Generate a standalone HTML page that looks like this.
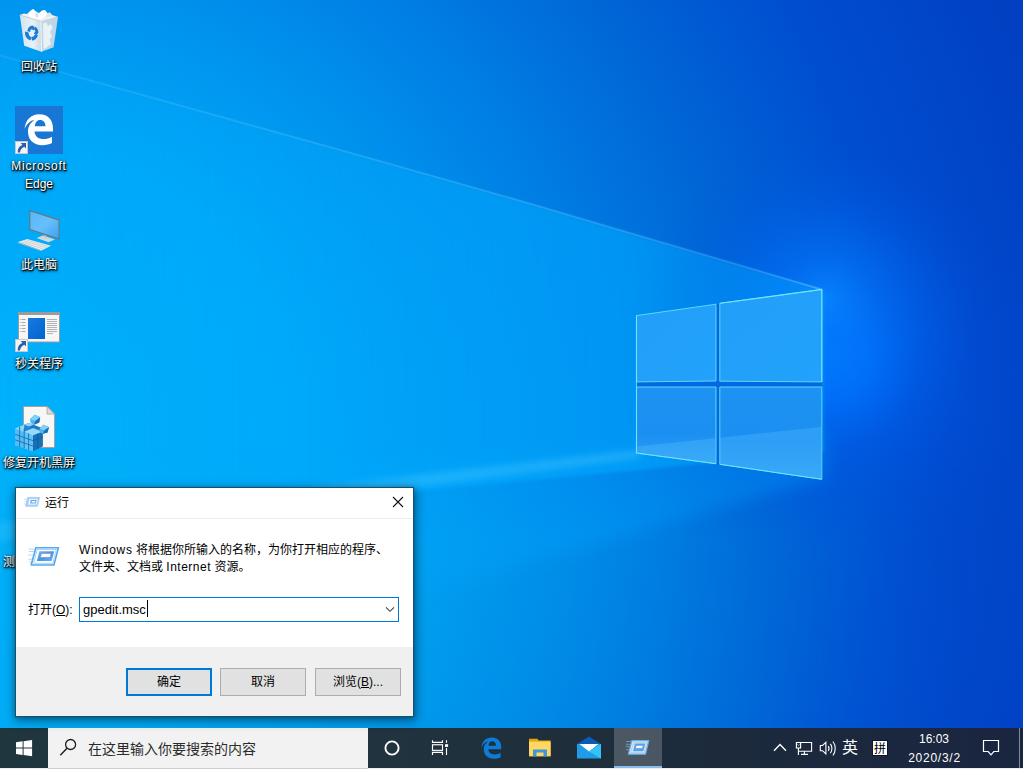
<!DOCTYPE html>
<html lang="zh-CN">
<head>
<meta charset="utf-8">
<title>运行</title>
<style>
html,body{margin:0;padding:0;}
body{width:1023px;height:769px;overflow:hidden;position:relative;background:#0a7fe0;font-family:"Liberation Sans","Noto Sans CJK SC",sans-serif;font-size:12px;color:#000;}
#wall{position:absolute;left:0;top:0;width:1023px;height:769px;display:block;}
.abs{position:absolute;}
/* desktop icons */
.dlabel{position:absolute;width:90px;text-align:center;color:#fff;font-size:12px;line-height:17px;text-shadow:1px 1px 1px rgba(0,0,0,.95),0 1px 2px rgba(0,0,0,.9),0 0 3px rgba(0,0,0,.6),1px 2px 3px rgba(0,0,0,.5);white-space:nowrap;}
/* dialog */
#dlg{position:absolute;left:15px;top:487px;width:399px;height:230px;box-sizing:border-box;border:1px solid #174f6c;background:#fff;box-shadow:1px 3px 10px 1px rgba(0,0,0,.4),0 1px 4px rgba(0,0,0,.22);}
#dlg .title{position:absolute;left:0;top:0;width:397px;height:30px;background:#fff;border-bottom:1px solid #ececec;}
#dlg .foot{position:absolute;left:0;top:159px;width:397px;height:69px;background:#f0f0f0;}
.btn{position:absolute;box-sizing:border-box;width:86px;height:28px;border:1px solid #adadad;background:#e1e1e1;text-align:center;line-height:27px;font-size:12px;}
/* taskbar */
#tb{position:absolute;left:0;top:728px;width:1023px;height:41px;background:linear-gradient(90deg,#20363f 0%,#20333e 38%,#1e2e3b 58%,#1b283d 80%,#1a2640 100%);}
#search{position:absolute;left:48px;top:0;width:320px;height:40px;background:#f2f2f2;border-bottom:1px solid #cdcdcd;}
#search span{position:absolute;left:40px;top:1px;line-height:40px;font-size:14px;color:#2b2b2b;}
.tray{position:absolute;color:#fff;}
</style>
</head>
<body>
<svg id="wall" viewBox="0 0 1023 769" width="1023" height="769">
<defs>
<radialGradient id="g0" cx="0" cy="440" r="1150" gradientUnits="userSpaceOnUse">
<stop offset="0" stop-color="#00b2fa"/>
<stop offset=".26" stop-color="#00a8f8"/>
<stop offset=".39" stop-color="#0094ee"/>
<stop offset=".52" stop-color="#007de3"/>
<stop offset=".65" stop-color="#0065d6"/>
<stop offset=".78" stop-color="#004ed0"/>
<stop offset=".91" stop-color="#0143c6"/>
<stop offset="1" stop-color="#033cbc"/>
</radialGradient>
<linearGradient id="gbeam" x1="0" y1="0" x2="822" y2="0" gradientUnits="userSpaceOnUse">
<stop offset="0" stop-color="#00acff" stop-opacity=".1"/>
<stop offset=".36" stop-color="#00acff" stop-opacity=".3"/>
<stop offset=".6" stop-color="#00aaff" stop-opacity=".55"/>
<stop offset=".76" stop-color="#00a8ff" stop-opacity=".62"/>
<stop offset=".86" stop-color="#00a6ff" stop-opacity=".48"/>
<stop offset="1" stop-color="#00a4ff" stop-opacity=".42"/>
</linearGradient>
<linearGradient id="gfloor" x1="0" y1="0" x2="822" y2="0" gradientUnits="userSpaceOnUse">
<stop offset="0" stop-color="#00a4ff" stop-opacity=".08"/>
<stop offset=".4" stop-color="#00a4ff" stop-opacity=".24"/>
<stop offset=".7" stop-color="#00a2ff" stop-opacity=".34"/>
<stop offset="1" stop-color="#0a9cff" stop-opacity=".36"/>
</linearGradient>
<radialGradient id="glow" cx="832" cy="360" r="215" gradientUnits="userSpaceOnUse">
<stop offset="0" stop-color="#007aff" stop-opacity="1"/>
<stop offset=".18" stop-color="#0070fc" stop-opacity=".92"/>
<stop offset=".4" stop-color="#0060ee" stop-opacity=".55"/>
<stop offset=".7" stop-color="#0054e0" stop-opacity=".2"/>
<stop offset="1" stop-color="#004cd8" stop-opacity="0"/>
</radialGradient>
<radialGradient id="glow2" cx="826" cy="300" r="150" gradientUnits="userSpaceOnUse">
<stop offset="0" stop-color="#0884ff" stop-opacity=".9"/>
<stop offset=".3" stop-color="#0478fa" stop-opacity=".5"/>
<stop offset=".7" stop-color="#006cf0" stop-opacity=".15"/>
<stop offset="1" stop-color="#0064e8" stop-opacity="0"/>
</radialGradient>
<linearGradient id="gfl2" x1="0" y1="0" x2="1023" y2="0" gradientUnits="userSpaceOnUse">
<stop offset="0" stop-color="#00b4f0" stop-opacity=".3"/>
<stop offset=".4" stop-color="#00b4f0" stop-opacity=".34"/>
<stop offset=".6" stop-color="#00b0f0" stop-opacity=".24"/>
<stop offset=".8" stop-color="#00a8f0" stop-opacity=".08"/>
<stop offset=".95" stop-color="#00a0f0" stop-opacity="0"/>
</linearGradient>
<linearGradient id="gfl2m" x1="0" y1="0" x2="0" y2="769" gradientUnits="userSpaceOnUse">
<stop offset=".58" stop-color="#000"/>
<stop offset=".7" stop-color="#fff"/>
<stop offset="1" stop-color="#fff"/>
</linearGradient>
<mask id="mfl2" maskUnits="userSpaceOnUse" x="0" y="0" width="1023" height="769"><rect width="1023" height="769" fill="url(#gfl2m)"/></mask>
<linearGradient id="gline" x1="0" y1="0" x2="822" y2="0" gradientUnits="userSpaceOnUse">
<stop offset="0" stop-color="#9fe0ff" stop-opacity=".12"/>
<stop offset=".6" stop-color="#9fe0ff" stop-opacity=".22"/>
<stop offset=".9" stop-color="#a8e6ff" stop-opacity=".2"/>
<stop offset="1" stop-color="#c8f4ff" stop-opacity=".3"/>
</linearGradient>
<linearGradient id="gstreak" x1="0" y1="0" x2="640" y2="0" gradientUnits="userSpaceOnUse">
<stop offset="0" stop-color="#40c4ff" stop-opacity=".3"/>
<stop offset=".65" stop-color="#40c4ff" stop-opacity=".42"/>
<stop offset="1" stop-color="#50c8ff" stop-opacity=".35"/>
</linearGradient>
<linearGradient id="gpt" x1="0" y1="0" x2="1" y2="1">
<stop offset="0" stop-color="#229ef8"/><stop offset="1" stop-color="#22a2fc"/>
</linearGradient>
<linearGradient id="gpb" x1="0" y1="0" x2="0" y2="1">
<stop offset="0" stop-color="#1c92f2"/><stop offset=".6" stop-color="#1c90f2"/><stop offset="1" stop-color="#28a0f6"/>
</linearGradient>
<filter id="b07" x="-5%" y="-5%" width="110%" height="110%"><feGaussianBlur stdDeviation=".7"/></filter>
<filter id="b2" x="-10%" y="-10%" width="120%" height="120%"><feGaussianBlur stdDeviation="1.5"/></filter>
<filter id="b3" x="-10%" y="-10%" width="120%" height="120%"><feGaussianBlur stdDeviation="3"/></filter>
<filter id="b8" x="-20%" y="-20%" width="140%" height="140%"><feGaussianBlur stdDeviation="8"/></filter>
</defs>
<rect width="1023" height="769" fill="url(#g0)"/>
<rect width="1023" height="769" fill="url(#glow)"/>
<rect width="1023" height="769" fill="url(#glow2)"/>
<rect width="1023" height="769" fill="url(#gfl2)" mask="url(#mfl2)"/>
<!-- lower beam (floor) soft -->
<polygon points="826,430 -40,500 -40,724 826,478" fill="url(#gfloor)" filter="url(#b8)"/>
<!-- upper beam -->
<polygon points="824,290 520,200.800 370,158.400 0,55.300 -20,49.700 -20,534 824,452" fill="url(#gbeam)" filter="url(#b2)"/>
<!-- floor streak -->
<polygon points="640,450 -20,524 -20,544 640,458" fill="url(#gstreak)" filter="url(#b3)"/>
<!-- beam edge line -->
<polyline points="-10,52.500 0,55.300 370,158.400 520,200.800 822,289.600" fill="none" stroke="url(#gline)" stroke-width="1.800" filter="url(#b07)"/>
<!-- logo -->
<polygon points="636.500,315.600 821.800,289.500 821.800,479.300 636.500,453" fill="#0468e2"/>
<g stroke="#5cd8f4" stroke-width="1" stroke-linejoin="miter">
<polygon points="636.500,315.600 716,304.200 716,381 636.500,381.900" fill="url(#gpt)"/>
<polygon points="719.800,303.300 821.800,289.500 821.800,381.900 719.800,381.200" fill="url(#gpt)"/>
<polygon points="636.500,387 716,387 716,463.700 636.500,453" fill="url(#gpb)"/>
<polygon points="719.800,387 821.800,387 821.800,479.300 719.800,464.300" fill="url(#gpb)"/>
</g>
<path d="M636.500 315.600 L636.500 453 L716 463.700 M719.800 464.300 L821.800 479.300 M719.800 303.300 L821.800 289.500 L821.800 381.900" stroke="#7ae8f8" stroke-width="1.100" fill="none" opacity=".8"/>
<!-- reflection in lower panes -->
<polygon points="637.200,446.400 715.700,438.200 715.700,463 637.200,452.400" fill="#5cc0ff" opacity=".32"/>
<polygon points="720.100,437.700 821.200,427 821.200,478.500 720.100,463.700" fill="#5cc0ff" opacity=".3"/>
</svg>


<!-- desktop icons -->
<svg class="abs" style="left:0;top:0" width="90" height="480" viewBox="0 0 90 480">
<defs>
<linearGradient id="binf" x1="0" y1="0" x2="1" y2="0"><stop offset="0" stop-color="#dfe7ee"/><stop offset=".6" stop-color="#f4f6f8"/><stop offset="1" stop-color="#d5dde5"/></linearGradient>
<linearGradient id="scr" x1="0" y1="0" x2="1" y2="1"><stop offset="0" stop-color="#5ab6f8"/><stop offset=".5" stop-color="#66c0fb"/><stop offset="1" stop-color="#3fa2f0"/></linearGradient>
<linearGradient id="blu" x1="0" y1="0" x2="1" y2="1"><stop offset="0" stop-color="#1a7ae0"/><stop offset="1" stop-color="#0063d0"/></linearGradient>
</defs>
<!-- recycle bin -->
<g>
<polygon points="19.800,15 41,21.500 41.500,51.800 24.200,45.800" fill="url(#binf)" opacity=".95"/>
<polygon points="41,21.500 58,17 53.600,47.300 41.500,51.800" fill="#d3dde7" opacity=".9"/>
<polygon points="43,24 46,22 48,26 51,24 52.500,28 50,32 52,36 49.500,40 51,44 46,48 43.500,49" fill="#f1f4f7" opacity=".9"/>
<polygon points="19.800,15 24,13.500 27,14 30,11 33,9 36,11.500 39,13 42,10.500 45,10 47.500,13 50,12.500 52,15 58,17 41,22" fill="#eef1f4"/>
<polygon points="28,15 31,11 33.500,9.200 36,12 38.500,14.500 42,11 45,10.300 46.500,13.500 45,17 41,19.500 36,18.500 32,18" fill="#ffffff"/>
<polygon points="36,12 38.500,14.500 37.500,18 35,16" fill="#d9dee4"/>
<polygon points="46.500,13.500 50,12.800 51,15.500 47,17.500" fill="#dfe4ea"/>
<path d="M19.800 15 L41 21.500 L58 17" stroke="#c2ccd6" stroke-width=".8" fill="none"/>
<path d="M41 21.500 L41.500 51.800" stroke="#f8fafc" stroke-width=".9" fill="none"/>
<g fill="#1c7ad9">
<path d="M27.300 31.300 C27.600 28 29.500 25.800 32.500 25.600 L34.800 27.200 L33.800 30.200 L31.500 29.200 C30.600 29.600 30.200 30.600 30.200 32 Z"/>
<path d="M35.200 26.800 C37.500 28 38.600 30.300 38.300 33 L36.500 35 L33.800 33.400 L35.300 31.600 C35.200 30.600 34.700 29.800 33.900 29.300 Z"/>
<path d="M38 35.300 C37 38.300 35 40.300 32.300 40.700 L31 37.200 L32.600 36.800 C33.800 36.300 34.600 35.400 35 34.200 Z"/>
<path d="M30.800 40.300 C28 39.800 26 37.800 25.200 35 C24.900 33.800 24.900 32.600 25.100 31.600 L28.600 32.600 C28.500 34.800 29.300 36.200 30.900 36.900 Z"/>
</g>
</g>
<!-- edge tile -->
<rect x="15" y="106" width="48" height="48" fill="#1877d4"/>
<path d="M24.500 129 C25.500 120 31 114.300 39.500 114.300 C48 114.300 53 120 53 128.500 L53 131.500 L34.500 131.500 C35 136.500 38.500 139 43.500 139 C46.500 139 49.500 138.200 52 136.700 L52 143 C49.500 144.400 46 145.200 42.500 145.200 C33.500 145.200 28 139.800 28 131.500 C28 126.500 30.500 122.200 35 119.800 C30 120.600 26.500 124.300 24.500 129 Z M34.800 126.300 L45.500 126.300 C45.500 122.500 43.500 120 40 120 C37 120 35.200 122.500 34.800 126.300 Z" fill="#fff"/>
<rect x="15.500" y="141.500" width="12" height="12" fill="#f4f4f4" stroke="#c8c8c8" stroke-width="1"/>
<path d="M26 143 L26 148.400 L24.300 146.700 C21.800 147.800 20.300 149.800 19.900 152.600 L17.800 152.600 C17.500 148.800 19.400 145.900 22.500 144.900 L20.700 143 Z" fill="#2b5eab"/>
<!-- this pc -->
<polygon points="29.300,209.900 59.500,219.600 59.500,239.800 29.300,229.700" fill="#6f7378"/>
<polygon points="30.400,211.400 58.500,220.400 58.500,238.300 30.400,228.900" fill="url(#scr)"/>
<polygon points="36.500,238 43,235.500 55,239.500 48.500,242.300" fill="#d4d8dc"/>
<polygon points="44,235 47,236 47,238 44,237.300" fill="#b9bec4"/>
<polygon points="17.900,242.100 27.300,239 51,245.800 41.600,250.500" fill="#e9ecef"/>
<polygon points="17.900,242.100 41.600,250.500 41.600,251.300 17.900,242.900" fill="#b4bac0"/>
<path d="M21 242 L43 248.800 M24 241 L46 247.600 M27 240 L48.500 246.600" stroke="#c3c9cf" stroke-width=".7" fill="none"/>
<!-- window shortcut -->
<rect x="18.500" y="312.500" width="41" height="29.500" fill="#f6f6f6" stroke="#9a9a9a" stroke-width="1"/>
<rect x="18" y="312" width="42" height="3" fill="#9b9b9b"/>
<rect x="28" y="318" width="17" height="21" fill="url(#blu)"/>
<path d="M21.500 319.500h4M21.500 322.500h4M21.500 325.500h4M21.500 328.500h4M21.500 331.500h4" stroke="#a9a9a9" stroke-width="1"/>
<path d="M19.700 319.500h.9M19.700 322.500h.9M19.700 325.500h.9M19.700 328.500h.9M19.700 331.500h.9" stroke="#a9a9a9" stroke-width="1"/>
<path d="M47 319.500h10M47 321.500h10M47 323.500h10M47 325.500h10M47 327.500h10M47 329.500h10M47 331.500h10M47 333.500h6" stroke="#b3b3b3" stroke-width="1"/>
<rect x="15.500" y="339.500" width="12" height="12" fill="#f4f4f4" stroke="#c8c8c8" stroke-width="1"/>
<path d="M26 341 L26 346.400 L24.300 344.700 C21.800 345.800 20.300 347.800 19.900 350.600 L17.800 350.600 C17.500 346.800 19.400 343.900 22.500 342.900 L20.700 341 Z" fill="#2b5eab"/>
<!-- reg file -->
<path d="M23.500 406.500 L47 406.500 L54.500 414 L54.500 447.500 L23.500 447.500 Z" fill="#f7f7f7" stroke="#a9a09a" stroke-width="1"/>
<path d="M47 406.500 L47 414 L54.500 414 Z" fill="#dcdcdc" stroke="#a9a09a" stroke-width=".8"/>
<g>
<!-- big block -->
<polygon points="15,428.500 24.200,424.700 33,428.300 33,451.200 15,445.500" fill="#55bdf3"/>
<polygon points="24.200,424.700 28.800,423 42.700,428.300 42.700,446.300 33,451.200 33,434.500 24.200,431" fill="#1d78bf"/>
<polygon points="15,428.500 24.200,424.700 28.800,423 33.500,424.800 24.200,428.800 24.200,432" fill="#8bd6fb"/>
<polygon points="24.200,431.500 33,435 33,451.200 24.200,448.200" fill="#62c4f6"/>
<polygon points="24.200,431.500 33,428 42.700,431.800 33,435.500" fill="#93dafc"/>
<polygon points="33,435.500 42.700,431.800 42.700,446.300 33,451.200" fill="#1a70b5"/>
<polygon points="24.200,424.700 33,428 24.200,431.500" fill="#2585cc"/>
<path d="M15 434.200 L24.200 437.600 L33 440.600 M15 439.800 L24.200 443 L33 446 M19.600 426.800 L19.600 447 M24.200 428.800 L24.200 448.300 M28.600 433.300 L28.600 449.800" stroke="#1670b4" stroke-width=".9" fill="none"/>
<path d="M33 440.600 L42.700 436.800 M37.800 433.600 L37.800 448.700" stroke="#0f5d9c" stroke-width=".8" fill="none"/>
<!-- floating cubes -->
<polygon points="30,419.300 34.800,414.800 40.200,417.300 39.200,422.600 34,424.800" fill="#2a8bd2"/>
<polygon points="30,419.300 34.800,414.800 40.200,417.300 35.200,421.300" fill="#7fd0fa"/>
<polygon points="35.200,421.300 40.200,417.300 39.200,422.600 34,424.800" fill="#176fb8"/>
<polygon points="30,419.300 35.200,421.300 34,424.800 30.800,423" fill="#4db4ee"/>
<polygon points="39.300,429.300 43.300,424.800 49,427.300 47.500,432.600 42.800,433.800" fill="#2a8bd2"/>
<polygon points="39.300,429.300 43.300,424.800 49,427.300 44.300,430.600" fill="#7fd0fa"/>
<polygon points="44.300,430.600 49,427.300 47.500,432.600 42.800,433.800" fill="#176fb8"/>
<polygon points="39.300,429.300 44.300,430.600 42.800,433.800 40,432.600" fill="#4db4ee"/>
</g>
</svg>
<div class="dlabel" style="left:-6px;top:59px;">回收站</div>
<div class="dlabel" style="left:-6px;top:158px;letter-spacing:.75px;">Microsoft</div>
<div class="dlabel" style="left:-6px;top:176px;">Edge</div>
<div class="dlabel" style="left:-6px;top:257px;">此电脑</div>
<div class="dlabel" style="left:-6px;top:356px;">秒关程序</div>
<div class="dlabel" style="left:-6px;top:455px;">修复开机黑屏</div>
<div class="dlabel" style="left:-6px;top:554px;">测试电脑速度</div>

<!-- taskbar -->
<div id="tb">
<svg class="abs" style="left:0;top:0" width="1023" height="41" viewBox="0 0 1023 41">
<!-- active app highlight -->
<rect x="614" y="0" width="48" height="41" fill="#ffffff" opacity=".2"/>
<rect x="614" y="38" width="48" height="2" fill="#86bdee"/>
<!-- start -->
<path d="M16 14.200 L22.600 13.300 L22.600 19.600 L16 19.600 Z M23.600 13.150 L32.100 12 L32.100 19.600 L23.600 19.600 Z M16 20.600 L22.600 20.600 L22.600 26.900 L16 26 Z M23.600 20.600 L32.100 20.600 L32.100 28.200 L23.600 27.050 Z" fill="#fff"/>
<!-- cortana -->
<circle cx="392" cy="20" r="6.600" fill="none" stroke="#fff" stroke-width="1.900"/>
<!-- task view -->
<g stroke="#fff" stroke-width="1.150" fill="none">
<path d="M432.500 12.200 L432.500 14.400 L442.500 14.400 L442.500 12.200 M432.500 27.100 L432.500 24.400 L442.500 24.400 L442.500 27.100 M446.500 12.200 L446.500 14.800 M446.500 20 L446.500 27.100"/>
<rect x="432.500" y="16.750" width="10" height="5.600"/>
</g>
<rect x="445" y="16.200" width="3.100" height="2.700" fill="#fff"/>
<!-- edge -->
<path transform="translate(481.300,9.400) scale(.7,.69)" d="M0 14.700 C1 5.700 6.500 0 15 0 C23.500 0 28.500 5.700 28.500 14.200 L28.500 17.200 L10 17.200 C10.500 22.200 14 24.700 19 24.700 C22 24.700 25 23.900 27.500 22.400 L27.500 28.700 C25 30.100 21.500 30.900 18 30.900 C9 30.900 3.500 25.500 3.500 17.200 C3.500 12.200 6 7.900 10.500 5.500 C5.500 6.300 2 10 0 14.700 Z M10.300 12 L21 12 C21 8.200 19 5.700 15.500 5.700 C12.500 5.700 10.700 8.200 10.300 12 Z" fill="#0c7cd8"/>
<!-- explorer -->
<path d="M529 12 L529 10.800 L537.500 10.800 L538.600 12.400 L550.600 12.400 L550.600 28 L529 28 Z" fill="#e6a80a"/>
<rect x="529" y="13.600" width="21.600" height="14.800" fill="#ffd762"/>
<path d="M533 28.300 L533 21.500 L547 21.500 L547 28.300 L543.500 28.300 L543.500 24.600 L536.500 24.600 L536.500 28.300 Z" fill="#3c97dd"/>
<!-- mail -->
<polygon points="577,16 589,8.600 601,16 601,18 577,18" fill="#0a5cb5"/>
<rect x="577" y="16" width="24" height="14.500" fill="#1f9ce8"/>
<polygon points="579.500,16 598.500,16 589,23.500" fill="#fff"/>
<polygon points="601,16 601,30.500 589,23.500" fill="#35c3f6"/>
<!-- run icon small -->
<g>
<path d="M626.200 13.500h4.600M626 16.300h4M625.800 18.600h3.600M626 21.700h2.800" stroke="#8fc4ee" stroke-width=".8" opacity=".75"/>
<polygon points="631.800,12.700 648.700,12.700 645.500,26.200 628.400,26.200" fill="#d6e9f9" stroke="#5fb0ee" stroke-width="1.300" stroke-linejoin="round"/>
<polygon points="633.300,14.400 646.700,14.400 644.300,24.400 630.800,24.400" fill="none" stroke="#a9b9c9" stroke-width=".6"/>
<polygon points="634.900,15.400 645.200,15.400 643.400,23.200 633,23.200" fill="#4fa6ec"/>
<polygon points="636.200,17.400 643,17.400 642.400,20.300 635.600,20.300" fill="#fff" stroke="#8a92d0" stroke-width=".6"/>
</g>
<!-- tray chevron -->
<path d="M774 22.800 L780 16.500 L786 22.800" stroke="#fff" stroke-width="1.300" fill="none"/>
<!-- network -->
<g stroke="#fff" stroke-width="1.100" fill="none">
<path d="M800.600 14.500 L811.600 14.500 L811.600 23.300 L798.400 23.300"/>
<rect x="796.400" y="14.500" width="4.200" height="5.500"/>
<path d="M798.400 20 L798.400 26.900 M804.400 23.300 L804.400 26.300 M801 26.400 L808 26.400"/>
<path d="M797.500 16.500 L798.500 17.500 L799.500 16.500" stroke-width=".8"/>
</g>
<!-- volume -->
<g stroke="#fff" stroke-width="1.100" fill="none">
<path d="M820.300 17.500 L822.600 17.500 L825.900 14.300 L825.900 26 L822.600 22.700 L820.300 22.700 Z"/>
<path d="M828.200 18.200 C829.200 19.500 829.200 21.500 828.200 22.800 M830.400 15.900 C832.400 18.500 832.400 22.500 830.400 25.100 M832.900 13.500 C836 17.200 836 23.800 832.900 27.500"/>
</g>
<!-- IME box -->
<rect x="872.500" y="12.500" width="15" height="15" fill="#fff" stroke="#0c1624" stroke-width="1"/>
<!-- notification -->
<path d="M983.500 12.500 L998.500 12.500 L998.500 23.500 L993.800 23.500 L991 26.800 L988.200 23.500 L983.500 23.500 Z" stroke="#fff" stroke-width="1.200" fill="none"/>
<rect x="1019" y="0" width="1" height="41" fill="#7f8a96"/>
<rect x="0" y="40" width="1023" height="1" fill="#ececec"/>
</svg>
<div id="search">
<svg class="abs" style="left:8px;top:6px" width="24" height="26" viewBox="0 0 24 26"><circle cx="14.600" cy="10.500" r="5" fill="none" stroke="#1f1f1f" stroke-width="1.300"/><path d="M11 14.300 L4.300 21.300" stroke="#1f1f1f" stroke-width="1.400"/></svg>
<span>在这里输入你要搜索的内容</span></div>
<div class="tray" style="left:841px;top:9px;width:18px;height:22px;font-size:16px;line-height:22px;text-align:center;">英</div>
<div class="tray" style="left:872px;top:13px;width:16px;height:16px;font-size:12px;line-height:16px;text-align:center;color:#000;">拼</div>
<div class="tray" style="left:904px;top:3px;width:60px;text-align:center;font-size:12px;line-height:17px;">16:03</div>
<div class="tray" style="left:904.500px;top:22px;width:60px;text-align:center;font-size:12px;line-height:17px;letter-spacing:.75px;">2020/3/2</div>
</div>

<!-- run dialog -->
<div id="dlg">
<div class="title">
<svg class="abs" style="left:7px;top:7px" width="20" height="16" viewBox="0 0 20 16">
<path d="M1.200 4.200h3M1.400 6.600h2.600M.8 9h2.600" stroke="#b5d8f5" stroke-width=".8"/>
<polygon points="4.800,2.400 16.600,2.400 14.400,11.300 2.600,11.300" fill="#a9d2f4" stroke="#86bff0" stroke-width=".6"/>
<polygon points="6.500,4.300 14.700,4.300 13.500,9.400 5.300,9.400" fill="#fff"/>
<polygon points="7.800,5.100 13.600,5.100 12.800,8.400 7,8.400" fill="#6ba2e4"/>
<polygon points="8.900,6 12.400,6 12.100,7.400 8.600,7.400" fill="#fff"/>
</svg>
<span class="abs" style="left:29px;top:7px;line-height:17px;font-size:12px;">运行</span>
<svg class="abs" style="left:376px;top:8px" width="12" height="12" viewBox="0 0 12 12"><path d="M1 1 L11 11 M11 1 L1 11" stroke="#111" stroke-width="1.100"/></svg>
</div>
<svg class="abs" style="left:10px;top:54px" width="40" height="30" viewBox="0 0 40 30">
<defs><linearGradient id="ri" x1="0" y1="0" x2="1" y2="1"><stop offset="0" stop-color="#74baf3"/><stop offset=".5" stop-color="#4696e6"/><stop offset="1" stop-color="#6ab4f1"/></linearGradient></defs>
<path d="M2.500 7h6.500M3 9.500h5.500M2 13h5.500M2.500 17.300h4.500M3 20.200h3.500" stroke="#aed5f5" stroke-width=".9"/>
<polygon points="9.900,5.800 32.400,5.800 27.900,23 5.200,23" fill="#fff" stroke="#54a7ed" stroke-width="1.600" stroke-linejoin="round"/>
<polygon points="11.300,7.500 30.300,7.500 26.800,21.300 7.600,21.300" fill="none" stroke="#93c9f4" stroke-width=".8"/>
<polygon points="13.400,9.200 28.200,9.200 25.700,19 10.900,19" fill="url(#ri)"/>
<polygon points="15.400,11.400 25.200,11.400 24.200,15.400 14.400,15.400" fill="#fff" stroke="#8088cf" stroke-width=".7"/>
</svg>
<div class="abs" style="left:63px;top:54px;line-height:17px;white-space:nowrap;"><span style="letter-spacing:.7px">Windows</span> 将根据你所输入的名称，为你打开相应的程序、<br>文件夹、文档或 <span style="letter-spacing:.5px">Internet</span> 资源。</div>
<div class="abs" style="left:12px;top:114px;line-height:17px;white-space:nowrap;">打开(<u>O</u>):</div>
<div class="abs" style="left:63px;top:109px;width:320px;height:25px;box-sizing:border-box;border:1px solid #0078d7;background:#fff;">
<span class="abs" style="left:3px;top:3px;line-height:17px;font-size:13px;">gpedit.msc</span>
<div class="abs" style="left:67px;top:2px;width:1px;height:17px;background:#000;"></div>
<svg class="abs" style="left:305px;top:8px" width="10" height="7" viewBox="0 0 10 7"><path d="M1 1.300 L5 5.300 L9 1.300" stroke="#444" stroke-width="1.100" fill="none"/></svg>
</div>
<div class="foot"></div>
<div class="btn" style="left:110px;top:180px;border:2px solid #0078d7;line-height:25px;">确定</div>
<div class="btn" style="left:204px;top:180px;">取消</div>
<div class="btn" style="left:299px;top:180px;">浏览(<u>B</u>)...</div>
</div>
</body>
</html>
